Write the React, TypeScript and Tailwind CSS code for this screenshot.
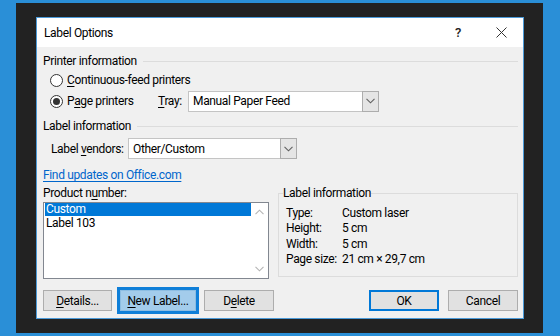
import React from 'react';

// Word "Label Options" dialog on a blue backdrop

const font = { fontFamily: 'Roboto, Lato, sans-serif' };

function U({ children }: { children: React.ReactNode }) {
  return <span className="underline underline-offset-2 decoration-[1px]">{children}</span>;
}

function Chevron({ up = false, className = '' }: { up?: boolean; className?: string }) {
  return (
    <svg width="9" height="6" viewBox="0 0 9 6" className={className}>
      <path
        d={up ? 'M0.5 5.2 L4.5 1.2 L8.5 5.2' : 'M0.5 0.8 L4.5 4.8 L8.5 0.8'}
        fill="none"
        stroke="currentColor"
        strokeWidth="1.1"
      />
    </svg>
  );
}

function Radio({ checked }: { checked?: boolean }) {
  return (
    <div className="w-[13px] h-[13px] rounded-full border border-[#333] bg-white flex items-center justify-center shrink-0">
      {checked && <div className="w-[7px] h-[7px] rounded-full bg-[#333]" />}
    </div>
  );
}

function Select({ value, width }: { value: string; width: string }) {
  return (
    <div className={`${width} h-[21px] border border-[#c4c4c4] bg-white flex items-stretch shrink-0`}>
      <div className="flex-1 pl-[4px] flex items-center text-[12px] text-black whitespace-nowrap">{value}</div>
      <div className="w-[17px] bg-[#e5e5e5] border border-[#adadad] -my-px -mr-px flex items-center justify-center text-[#606060]">
        <Chevron />
      </div>
    </div>
  );
}

function GroupHeader({ title }: { title: string }) {
  return (
    <div className="h-[14px] flex items-center gap-[6px]">
      <span className="text-[12px] leading-[14px] text-black whitespace-nowrap">{title}</span>
      <div className="flex-1 h-px bg-[#dcdcdc]" />
    </div>
  );
}

function Btn({ children, w = 'w-[70px]', variant = 'normal' }: { children: React.ReactNode; w?: string; variant?: 'normal' | 'default' | 'focus' }) {
  if (variant === 'focus') {
    return (
      <div className={`${w} h-[27px] border-[3px] border-[#0f7fd8] bg-[#a3cceb] flex items-center justify-center text-[12px] text-black`}>
        <div className="w-full h-full border border-[#8cbde2] flex items-center justify-center whitespace-nowrap">{children}</div>
      </div>
    );
  }
  return (
    <div
      className={`${w} h-[21px] bg-[#e1e1e1] border ${variant === 'default' ? 'border-[#0078d7] border-2' : 'border-[#adadad]'} flex items-center justify-center text-[12px] text-black whitespace-nowrap`}
    >
      {children}
    </div>
  );
}

export default function App() {
  const info = [
    ['Type:', 'Custom laser'],
    ['Height:', '5 cm'],
    ['Width:', '5 cm'],
    ['Page size:', '21 cm × 29,7 cm'],
  ];

  return (
    <div className="w-[560px] h-[336px] bg-[#2a8fd7] pt-[3px] pl-[16px] tracking-[-0.35px]" style={font}>
      <div className="w-[527px] h-[330px] bg-[#222222] pt-[14px] pl-[20px]">
        <div className="w-[488px] h-[302px] border border-[#4b9ad8] bg-[#f0f0f0] flex flex-col">
          {/* ── Title bar ── */}
          <div className="h-[29px] bg-white flex items-center pl-[7px] text-[12px] text-black">
            <span className="flex-1">Label Options</span>
            <span className="w-[10px] text-[13px] mr-[31px] text-[#222] font-medium">?</span>
            <svg width="11" height="11" viewBox="0 0 11 11" className="mr-[16px]">
              <path d="M0.5 0.5 L10.5 10.5 M10.5 0.5 L0.5 10.5" stroke="#333" strokeWidth="1" />
            </svg>
          </div>

          {/* ── Body ── */}
          <div className="flex-1 flex flex-col pl-[6px] pr-[5px]">
            <div className="mt-[7px]">
              <GroupHeader title="Printer information" />
            </div>

            <div className="mt-[2px] h-[20px] flex items-center pl-[7px] gap-[4px] text-[12px] text-black">
              <Radio />
              <span className="whitespace-nowrap"><U>C</U>ontinuous-feed printers</span>
            </div>

            <div className="mt-[1px] h-[20px] flex items-center pl-[7px] text-[12px] text-black">
              <div className="flex items-center gap-[4px] w-[108px] shrink-0">
                <Radio checked />
                <span className="whitespace-nowrap">P<U>a</U>ge printers</span>
              </div>
              <span className="w-[30px] shrink-0"><U>T</U>ray:</span>
              <Select value="Manual Paper Feed" width="w-[191px]" />
            </div>

            <div className="mt-[8px]">
              <GroupHeader title="Label information" />
            </div>

            <div className="mt-[5px] h-[21px] flex items-center pl-[8px] text-[12px] text-black">
              <span className="w-[77px] shrink-0 whitespace-nowrap">Label <U>v</U>endors:</span>
              <Select value="Other/Custom" width="w-[169px]" />
            </div>

            <div className="mt-[9px] h-[14px] flex items-center">
              <span className="text-[12px] leading-[14px] text-[#0066cc] underline underline-offset-2 whitespace-nowrap">Find updates on Office.com</span>
            </div>

            <div className="mt-[4px] flex gap-[9px]">
              {/* Product number list */}
              <div className="w-[226px] flex flex-col">
                <span className="h-[14px] text-[12px] leading-[14px] text-black whitespace-nowrap">Product n<U>u</U>mber:</span>
                <div className="mt-[2px] h-[77px] border border-[#828790] bg-white flex">
                  <div className="flex-1 pl-[1px] flex flex-col text-[12px]">
                    <div className="h-[13px] leading-[13px] bg-[#0078d7] text-white pl-[1px]">Custom</div>
                    <div className="h-[14px] leading-[14px] text-black pl-[1px]">Label 103</div>
                  </div>
                  <div className="w-[17px] flex flex-col items-center justify-between py-[6px] text-[#b4b4b4]">
                    <Chevron up />
                    <Chevron />
                  </div>
                </div>
              </div>

              {/* Label information */}
              <fieldset className="w-[240px] h-[91px] border border-[#dcdcdc] px-[4px]">
                <legend className="text-[12px] leading-[14px] text-black px-0">Label information</legend>
                <div className="mt-[5px] pl-[3px] flex flex-col text-[12px] text-black">
                  {info.map(([k, v]) => (
                    <div key={k} className="h-[15.5px] flex items-center whitespace-nowrap">
                      <span className="w-[56px] shrink-0">{k}</span>
                      <span>{v}</span>
                    </div>
                  ))}
                </div>
              </fieldset>
            </div>

            {/* ── Buttons ── */}
            <div className="mt-[8px] h-[27px] flex items-center">
              <Btn w="w-[69px]"><span><U>D</U>etails...</span></Btn>
              <div className="ml-[5px]">
                <Btn w="w-[82px]" variant="focus"><span><U>N</U>ew Label...</span></Btn>
              </div>
              <div className="ml-[5px]">
                <Btn><span>D<U>e</U>lete</span></Btn>
              </div>
              <div className="flex-1" />
              <Btn variant="default">OK</Btn>
              <div className="ml-[9px]">
                <Btn>Cancel</Btn>
              </div>
            </div>
          </div>
        </div>
      </div>
    </div>
  );
}
